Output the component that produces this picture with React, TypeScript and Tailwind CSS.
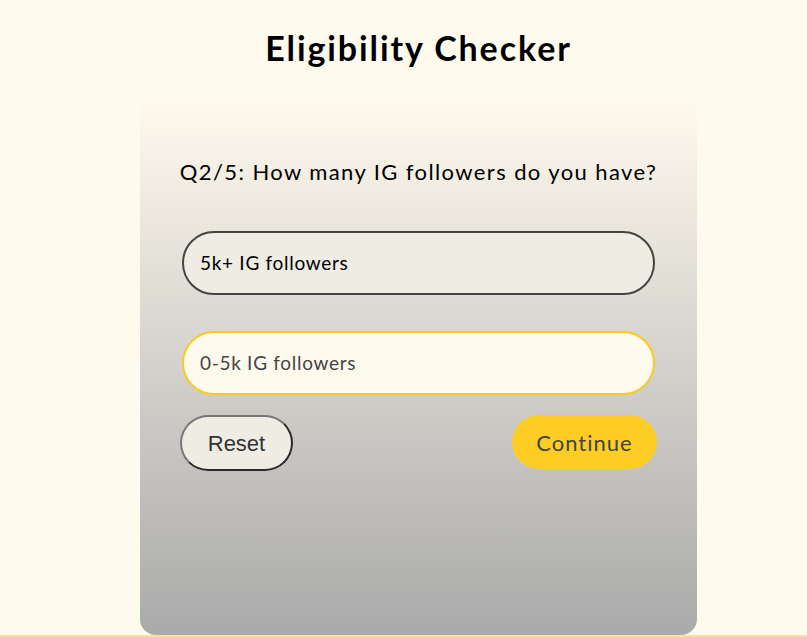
export default function App() {
  return (
    <div className="min-h-[637px] bg-[#fffaee] pl-[30px] font-['Lato',sans-serif] text-black">
      <div className="flex flex-col items-center">
        {/* Title */}
        <h1 className="mt-[26px] text-[34px] font-bold leading-[44px] tracking-[1.9px]">
          Eligibility Checker
        </h1>

        {/* Card */}
        <div className="mt-[28px] flex h-[537px] w-[557px] flex-col rounded-2xl bg-gradient-to-b from-[#fffaee] to-[#aaaaaa] px-[40px] pt-[60px]">
          <p className="-mx-[20px] whitespace-nowrap text-center text-[22px] leading-[28px] tracking-[1.4px]">
            Q2/5: How many IG followers do you have?
          </p>

          <div className="mt-[45px] flex flex-col gap-[36px] px-[2px]">
            <button className="h-[64px] w-full rounded-full border-2 border-[#444444] bg-[#efede3] px-[16px] text-left text-[19px] tracking-[0.7px] text-black">
              5k+ IG followers
            </button>
            <button className="h-[64px] w-full rounded-full border-2 border-[#fcc923] bg-[#fffaee] px-[16px] text-left text-[19px] tracking-[0.7px] text-[#444444]">
              0-5k IG followers
            </button>
          </div>

          <div className="mt-[20px] flex items-start justify-between">
            <button className="h-[56px] w-[113px] rounded-full border-2 border-b-[#2a2a2a] border-l-[#777777] border-r-[#2a2a2a] border-t-[#777777] bg-[#efede3] font-['Liberation_Sans',sans-serif] text-[22px] text-[#333333]">
              Reset
            </button>
            <button className="h-[54px] w-[145px] rounded-full bg-[#fdcd25] text-[22px] tracking-[1px] text-[#444444]">
              Continue
            </button>
          </div>
        </div>
      </div>
      <div className="-ml-[30px] h-[3px] bg-[#f6e39c]" />
    </div>
  );
}
